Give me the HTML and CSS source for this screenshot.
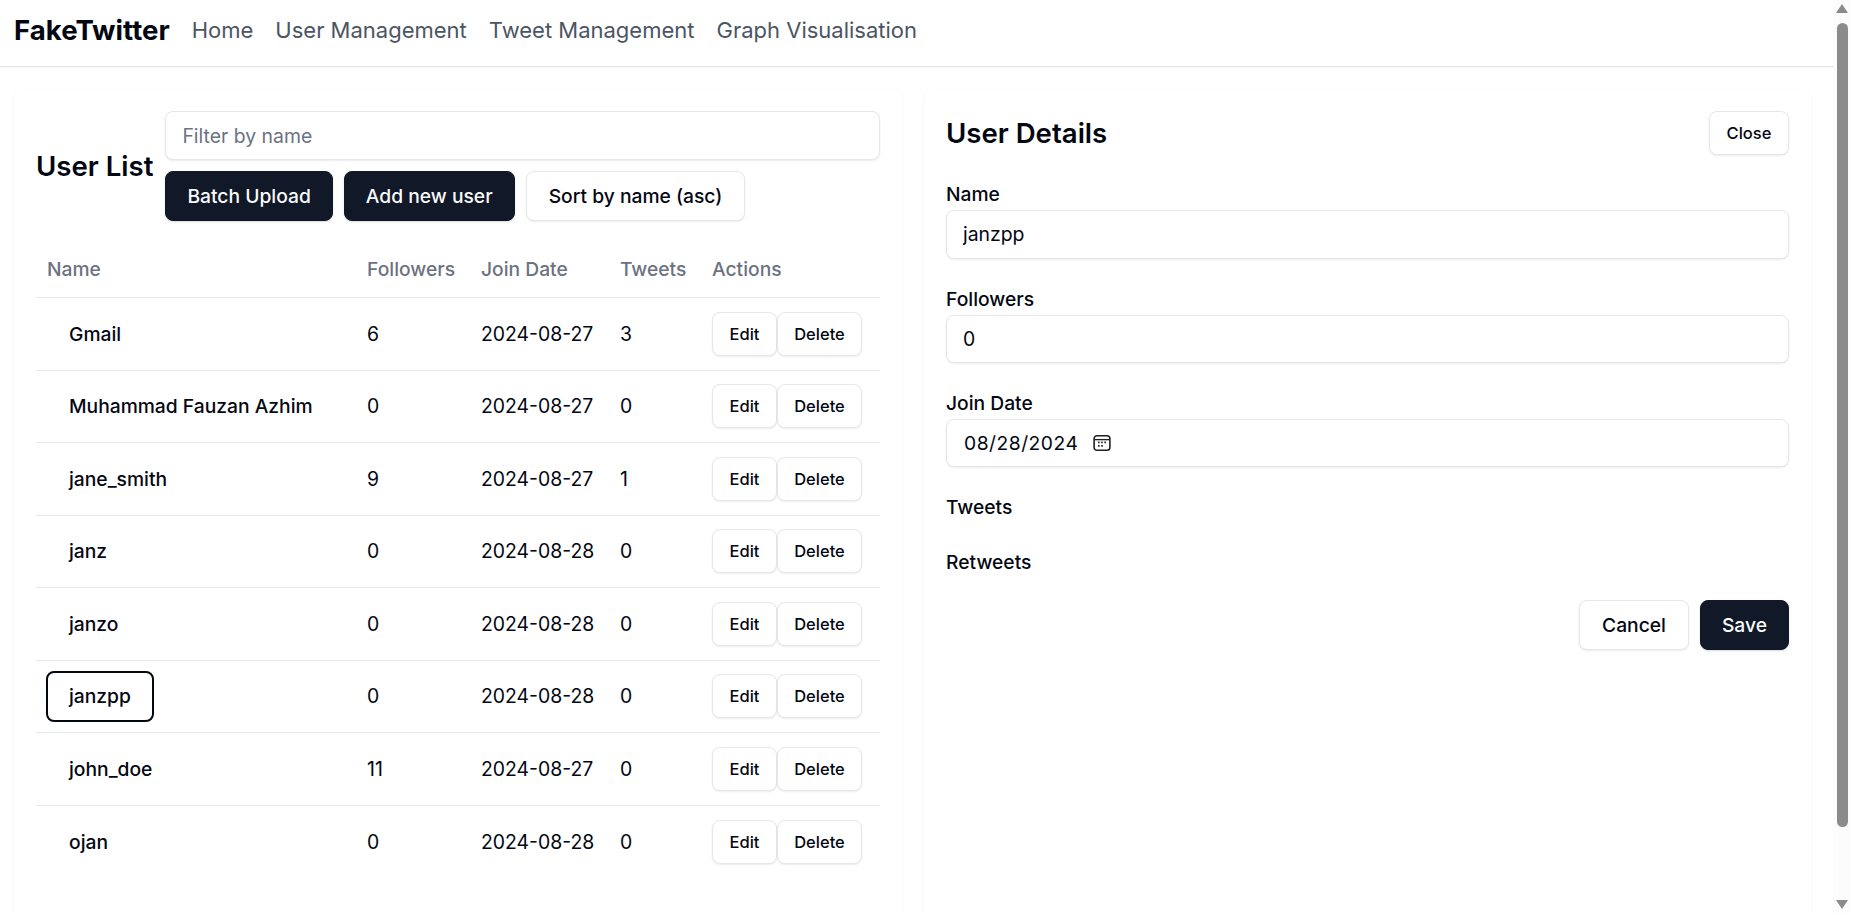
FILE: index.html
```html
<!DOCTYPE html>
<html lang="en">
<head>
  <meta charset="UTF-8">
  <meta name="viewport" content="width=device-width, initial-scale=1.0">
  <title>FakeTwitter</title>
  <link rel="stylesheet" href="styles.css">
</head>
<body>
  <div class="page">
    <main class="main">
      <nav class="nav">
        <span class="brand">FakeTwitter</span>
        <a class="nav-link">Home</a>
        <a class="nav-link">User Management</a>
        <a class="nav-link">Tweet Management</a>
        <a class="nav-link">Graph Visualisation</a>
      </nav>

      <div class="columns">
        <section class="card">
          <div class="list-head">
            <h2 class="title">User List</h2>
            <div class="list-tools">
              <input class="input" type="text" placeholder="Filter by name">
              <div class="tool-buttons">
                <button class="btn btn-dark">Batch Upload</button>
                <button class="btn btn-dark">Add new user</button>
                <button class="btn btn-light">Sort by name (asc)</button>
              </div>
            </div>
          </div>

          <table class="users">
            <thead>
              <tr>
                <th class="col-name">Name</th>
                <th class="col-followers">Followers</th>
                <th class="col-date">Join Date</th>
                <th class="col-tweets">Tweets</th>
                <th class="col-actions">Actions</th>
              </tr>
            </thead>
            <tbody>
              <tr>
                <td><button class="name-btn">Gmail</button></td>
                <td>6</td><td>2024-08-27</td><td>3</td>
                <td><button class="btn-sm btn-edit">Edit</button><button class="btn-sm btn-delete">Delete</button></td>
              </tr>
              <tr>
                <td><button class="name-btn">Muhammad Fauzan Azhim</button></td>
                <td>0</td><td>2024-08-27</td><td>0</td>
                <td><button class="btn-sm btn-edit">Edit</button><button class="btn-sm btn-delete">Delete</button></td>
              </tr>
              <tr>
                <td><button class="name-btn">jane_smith</button></td>
                <td>9</td><td>2024-08-27</td><td>1</td>
                <td><button class="btn-sm btn-edit">Edit</button><button class="btn-sm btn-delete">Delete</button></td>
              </tr>
              <tr>
                <td><button class="name-btn">janz</button></td>
                <td>0</td><td>2024-08-28</td><td>0</td>
                <td><button class="btn-sm btn-edit">Edit</button><button class="btn-sm btn-delete">Delete</button></td>
              </tr>
              <tr>
                <td><button class="name-btn">janzo</button></td>
                <td>0</td><td>2024-08-28</td><td>0</td>
                <td><button class="btn-sm btn-edit">Edit</button><button class="btn-sm btn-delete">Delete</button></td>
              </tr>
              <tr>
                <td><button class="name-btn selected">janzpp</button></td>
                <td>0</td><td>2024-08-28</td><td>0</td>
                <td><button class="btn-sm btn-edit">Edit</button><button class="btn-sm btn-delete">Delete</button></td>
              </tr>
              <tr>
                <td><button class="name-btn">john_doe</button></td>
                <td>11</td><td>2024-08-27</td><td>0</td>
                <td><button class="btn-sm btn-edit">Edit</button><button class="btn-sm btn-delete">Delete</button></td>
              </tr>
              <tr>
                <td><button class="name-btn">ojan</button></td>
                <td>0</td><td>2024-08-28</td><td>0</td>
                <td><button class="btn-sm btn-edit">Edit</button><button class="btn-sm btn-delete">Delete</button></td>
              </tr>
            </tbody>
          </table>
        </section>

        <section class="card">
          <div class="details-head">
            <h2 class="title">User Details</h2>
            <button class="btn-close">Close</button>
          </div>
          <div class="field">
            <label class="label">Name</label>
            <input class="input input-value" type="text" value="janzpp">
          </div>
          <div class="field">
            <label class="label">Followers</label>
            <input class="input input-value" type="text" value="0">
          </div>
          <div class="field">
            <label class="label">Join Date</label>
            <div class="input date-box">
              <span class="date-text">08/28/2024</span>
              <svg class="cal-icon" viewBox="0 0 16 16" fill="none" stroke="#1f1f1f">
                <rect x="1" y="1.5" width="14" height="13" rx="2.5" stroke-width="1.4"/>
                <path d="M1 5h14" stroke-width="1.2"/>
                <path d="M4.5 7.5h1.4M7.3 7.5h1.4M10.1 7.5h1.4M4.5 10.5h1.4M7.3 10.5h1.4" stroke-width="1.5"/>
              </svg>
            </div>
          </div>
          <div class="plain-label label">Tweets</div>
          <div class="plain-label label">Retweets</div>
          <div class="form-actions">
            <button class="btn btn-light">Cancel</button>
            <button class="btn btn-dark">Save</button>
          </div>
        </section>
      </div>
    </main>

    <div class="scrollbar">
      <span class="arrow-up"></span>
      <span class="thumb"></span>
      <span class="arrow-down"></span>
    </div>
  </div>
</body>
</html>
```
FILE: styles.css
```css
* {
  box-sizing: border-box;
}
html, body {
  margin: 0;
  height: 100%;
  overflow: hidden;
}
body {
  font-family: Inter, "Liberation Sans", sans-serif;
  color: #030712;
  background: #fff;
}
button, input {
  font-family: inherit;
}

.page {
  display: flex;
  height: 913px;
}
.main {
  flex: 1;
  min-width: 0;
  overflow: hidden;
}

/* top bar */
.nav {
  display: flex;
  align-items: center;
  gap: 22px;
  height: 67px;
  padding: 0 0 7px 14px;
  border-bottom: 1px solid #e2e5ea;
  box-shadow: 0 1px 2px rgba(0, 0, 0, 0.04);
}
.brand {
  font-size: 27.6px;
  font-weight: 700;
  color: #030712;
}
.nav-link {
  font-size: 22px;
  color: #4b5563;
}

/* two cards */
.columns {
  display: grid;
  grid-template-columns: 1fr 1fr;
  gap: 22px;
  padding: 22px 22px 0 14px;
}
.card {
  height: 900px;
  padding: 22px;
  border-radius: 9px;
  background: #fff;
  box-shadow: 0 1px 3px rgba(0, 0, 0, 0.06), 0 0 2px rgba(0, 0, 0, 0.02);
}
.title {
  margin: 0;
  font-size: 27.6px;
  font-weight: 600;
  color: #030712;
}

/* list header */
.list-head {
  display: flex;
  align-items: center;
  gap: 12px;
}
.list-tools {
  flex: 1;
  display: flex;
  flex-direction: column;
  gap: 11px;
}
.tool-buttons {
  display: flex;
  align-items: center;
  gap: 11px;
}

.input {
  width: 100%;
  height: 49px;
  padding: 0 16px;
  font-size: 19.4px;
  color: #030712;
  background: #fff;
  border: 1px solid #e5e7eb;
  border-radius: 8px;
  box-shadow: 0 1px 2px rgba(0, 0, 0, 0.08);
  outline: none;
}
.input::placeholder {
  color: #6b7280;
}

.btn {
  height: 50px;
  padding: 0 21px;
  font-size: 19.25px;
  font-weight: 500;
  border-radius: 8px;
  cursor: pointer;
}
.btn-dark {
  color: #f9fafb;
  background: #111827;
  border: 1px solid #111827;
  box-shadow: 0 1px 2px rgba(0, 0, 0, 0.15);
}
.btn-light {
  padding: 0 22px;
  color: #030712;
  background: #fff;
  border: 1px solid #e5e7eb;
  box-shadow: 0 1px 2px rgba(0, 0, 0, 0.08);
}

/* table */
.users {
  width: 844px;
  margin-top: 12.5px;
  border-collapse: collapse;
  table-layout: fixed;
  font-size: 19.4px;
}
.users th {
  height: 64px;
  padding: 8px 11px 0;
  text-align: left;
  font-size: 19.25px;
  font-weight: 450;
  color: #6b7280;
  border-bottom: 1px solid #e5e7eb;
}
.users td {
  height: 72.5px;
  padding: 0 11px;
  border-bottom: 1px solid #e5e7eb;
}
.users td:first-child {
  padding-left: 10px;
}
.users tbody tr:last-child td {
  border-bottom: none;
}
.col-name { width: 320px; }
.col-followers { width: 114px; }
.col-date { width: 139px; }
.col-tweets { width: 92px; }
.col-actions { width: 179px; }

.name-btn {
  height: 51px;
  padding: 0 22px;
  font-size: 19.25px;
  font-weight: 450;
  color: #030712;
  background: none;
  border: 1px solid transparent;
  border-radius: 8px;
}
.name-btn.selected {
  border: 2px solid #030712;
  padding: 0 21px;
}
.btn-sm {
  height: 44px;
  padding: 0;
  font-size: 16.5px;
  font-weight: 500;
  color: #030712;
  background: #fff;
  border: 1px solid #e5e7eb;
  border-radius: 8px;
  box-shadow: 0 1px 2px rgba(0, 0, 0, 0.08);
}
.btn-edit { width: 65px; }
.btn-delete { width: 85px; }

/* details form */
.details-head {
  display: flex;
  align-items: center;
  justify-content: space-between;
  margin-bottom: 28px;
}
.btn-close {
  height: 44px;
  width: 80px;
  font-size: 16.5px;
  font-weight: 500;
  color: #030712;
  background: #fff;
  border: 1px solid #e5e7eb;
  border-radius: 8px;
  box-shadow: 0 1px 2px rgba(0, 0, 0, 0.08);
}
.field {
  margin-bottom: 29px;
}
.label {
  display: block;
  margin-bottom: 5px;
  font-size: 19.25px;
  font-weight: 450;
  line-height: 22px;
  color: #030712;
}
.input-value {
  height: 48.6px;
}
.date-box {
  display: flex;
  align-items: center;
  gap: 15px;
  height: 48px;
  padding-left: 17px;
}
.date-text {
  font-size: 19.25px;
  letter-spacing: 0.5px;
}
.cal-icon {
  width: 18px;
  height: 18px;
}
.plain-label {
  margin-bottom: 33px;
}
.plain-label + .plain-label {
  margin-bottom: 27px;
}
.form-actions {
  display: flex;
  justify-content: flex-end;
  gap: 11px;
}

/* scrollbar drawn by hand */
.scrollbar {
  position: relative;
  width: 18px;
  flex: none;
  background: #fcfcfc;
}
.arrow-up, .arrow-down {
  position: absolute;
  left: 3px;
  width: 0;
  height: 0;
  border-left: 6.5px solid transparent;
  border-right: 6.5px solid transparent;
}
.arrow-up {
  top: 4px;
  border-bottom: 9px solid #8b8b8b;
}
.arrow-down {
  bottom: 4px;
  border-top: 9px solid #8b8b8b;
}
.thumb {
  position: absolute;
  left: 4px;
  top: 23px;
  width: 11px;
  height: 804px;
  background: #8b8b8b;
  border-radius: 6px;
}
```
